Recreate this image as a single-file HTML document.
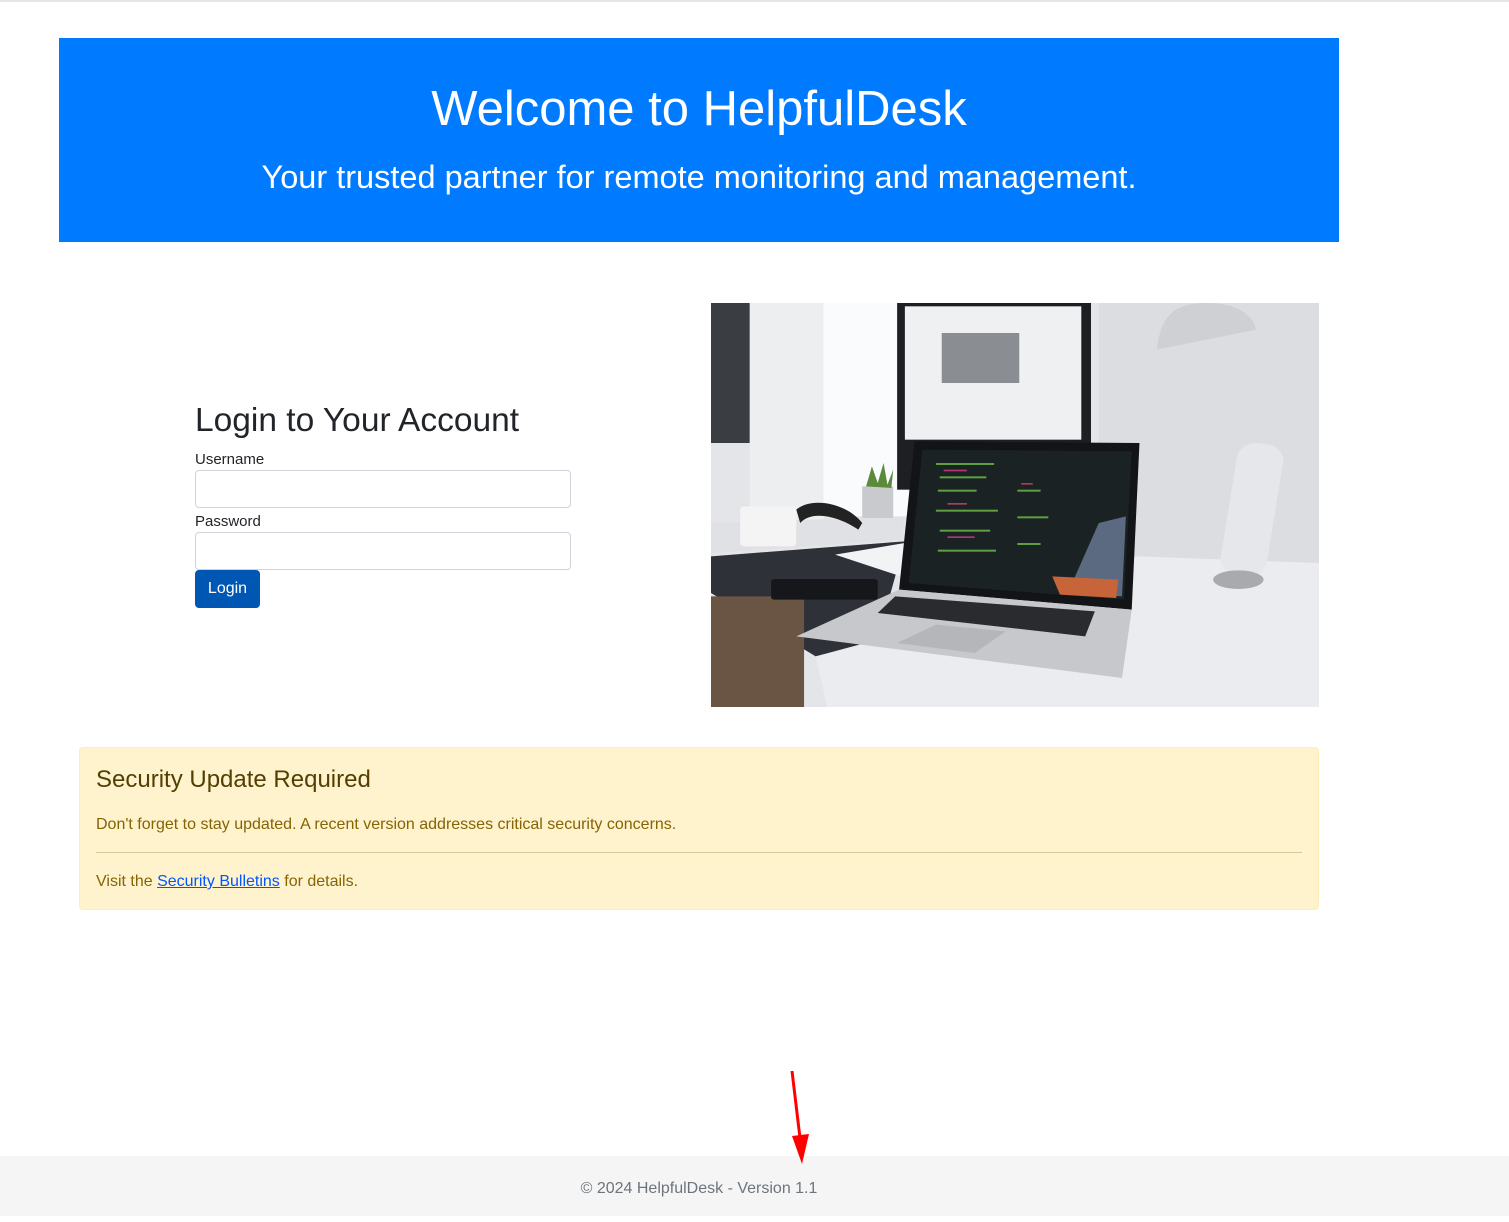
<!DOCTYPE html>
<html><head><meta charset="utf-8"><style>
*{box-sizing:border-box}
body{margin:0;width:1509px;height:1216px;position:relative;font-family:"Liberation Sans",sans-serif;background:#fff;color:#212529;overflow:hidden}
.top{position:absolute;left:0;top:0;width:1509px;height:2px;background:#e6e6e6}
.banner{position:absolute;left:59px;top:38px;width:1280px;height:204px;background:#007bff;color:#fff;text-align:center}
.banner h1{margin:0;position:absolute;top:47px;width:100%;font-size:49px;font-weight:500;line-height:1}
.banner p{margin:0;position:absolute;top:123px;width:100%;font-size:32.5px;line-height:1}
.login{position:absolute;left:195px;top:400px;width:376px}
.login h2{margin:0 0 8px;font-size:33.5px;font-weight:500;line-height:42px}
label{display:block;font-size:15px;line-height:20px;margin-top:0}
.inp{height:38px;border:1px solid #ced4da;border-radius:4px;margin-bottom:4px}
.btn{display:inline-block;background:#0056b3;color:#fff;border-radius:4px;font-size:16px;width:65px;height:38px;line-height:38px;text-align:center}
.img{position:absolute;left:711px;top:303px;width:608px;height:404px}
.alert{position:absolute;left:79px;top:747px;width:1240px;height:163px;background:#fff3cd;border:1px solid #ffeeba;border-radius:4px;color:#856404;padding:0 16px}
.alert h4{margin:0;position:absolute;top:18px;font-size:24px;font-weight:500;color:#533f03}
.alert .t1{position:absolute;top:68px;font-size:16px}
.alert hr{position:absolute;top:104px;left:16px;right:16px;margin:0;border:0;border-top:1px solid #d9c99a}
.alert .t2{position:absolute;top:125px;font-size:16px}
.alert a{color:#0056ff;text-decoration:underline}
.footer{position:absolute;left:0;top:1156px;width:1509px;height:60px;background:#f5f5f5;color:#6c757d;font-size:16px;line-height:66px}
.footer span{position:absolute;left:59px;width:1280px;text-align:center}
</style></head><body>
<div class="top"></div>
<div class="banner"><h1>Welcome to HelpfulDesk</h1><p>Your trusted partner for remote monitoring and management.</p></div>
<div class="login">
<h2>Login to Your Account</h2>
<label>Username</label><div class="inp"></div>
<label>Password</label><div class="inp" style="margin-bottom:0"></div>
<div class="btn">Login</div>
</div>
<svg class="img" viewBox="0 0 1568 1212" preserveAspectRatio="none">
<rect width="1568" height="1212" fill="#e4e5e9"/>
<rect x="1000" y="0" width="568" height="800" fill="#dcdde1"/>
<rect x="0" y="0" width="100" height="420" fill="#3a3d42"/>
<rect x="100" y="0" width="190" height="650" fill="#eceef0"/>
<rect x="290" y="0" width="220" height="640" fill="#fafbfc"/>
<rect x="480" y="0" width="500" height="560" fill="#1d1f23"/>
<rect x="500" y="10" width="455" height="400" fill="#eef0f2"/>
<rect x="595" y="90" width="200" height="150" fill="#8a8d92"/>
<polygon points="0,760 500,715 430,1010 270,1060 0,870" fill="#2e3137"/>
<polygon points="0,660 500,640 490,710 0,750" fill="#e0e1e4"/>
<polygon points="270,1060 480,1000 1100,760 1568,780 1568,1212 300,1212" fill="#ebecef"/>
<rect x="0" y="880" width="240" height="332" fill="#6a5545"/>
<rect x="75" y="610" width="145" height="120" rx="10" fill="#f4f4f4"/>
<path d="M220 620 C260 580 350 600 390 660 L 380 680 C330 640 260 620 230 660Z" fill="#222"/>
<rect x="390" y="550" width="80" height="95" fill="#c8cacd"/>
<path d="M400 550 L415 490 L430 540 L445 480 L455 545 L470 500 L465 555Z" fill="#5a8a3a"/>
<rect x="155" y="828" width="275" height="62" rx="8" fill="#15171a"/>
<polygon points="320,755 500,720 490,820" fill="#f2f3f4"/>
<polygon points="525,415 1105,420 1085,920 485,860" fill="#121417"/>
<polygon points="545,440 1085,445 1065,890 510,840" fill="#1b2224"/>
<polygon points="1000,660 1070,640 1060,880 920,870" fill="#5b6a80"/>
<polygon points="880,820 1050,830 1045,885 900,875" fill="#c8643a"/>
<g fill="#6fbf4a" opacity=".8"><rect x="580" y="480" width="150" height="6"/><rect x="590" y="520" width="120" height="6"/><rect x="585" y="560" width="100" height="6"/><rect x="580" y="620" width="160" height="6"/><rect x="590" y="680" width="130" height="6"/><rect x="585" y="740" width="150" height="6"/><rect x="790" y="560" width="60" height="6"/><rect x="790" y="640" width="80" height="6"/><rect x="790" y="720" width="60" height="6"/></g>
<g fill="#d04080" opacity=".8"><rect x="600" y="500" width="60" height="5"/><rect x="610" y="600" width="50" height="5"/><rect x="800" y="540" width="30" height="5"/><rect x="610" y="700" width="70" height="5"/></g>
<polygon points="220,1000 485,860 1085,920 1060,1125" fill="#c7c8cb"/>
<polygon points="430,930 475,880 990,925 965,1000" fill="#2a2b2e"/>
<polygon points="480,1020 580,965 760,985 680,1050" fill="#b5b6b9"/>
<path d="M1150 140 C1160 30 1200 0 1280 0 C1360 0 1400 40 1405 80 Z" fill="#cfd0d3"/>
<rect x="1335" y="420" width="120" height="400" rx="50" fill="#e6e7ea" transform="rotate(8 1395 620)"/>
<ellipse cx="1360" cy="830" rx="65" ry="28" fill="#a9aaad"/>
</svg>
<div class="alert">
<h4>Security Update Required</h4>
<div class="t1">Don't forget to stay updated. A recent version addresses critical security concerns.</div>
<hr>
<div class="t2">Visit the <a>Security Bulletins</a> for details.</div>
</div>
<div class="footer"><span>© 2024 HelpfulDesk - Version 1.1</span></div>
<svg style="position:absolute;left:780px;top:1068px;z-index:5" width="40" height="100"><line x1="12" y1="3" x2="20" y2="70" stroke="#f00" stroke-width="3"/><polygon points="12,68 29,66 22,96" fill="#f00"/></svg>
</body></html>
